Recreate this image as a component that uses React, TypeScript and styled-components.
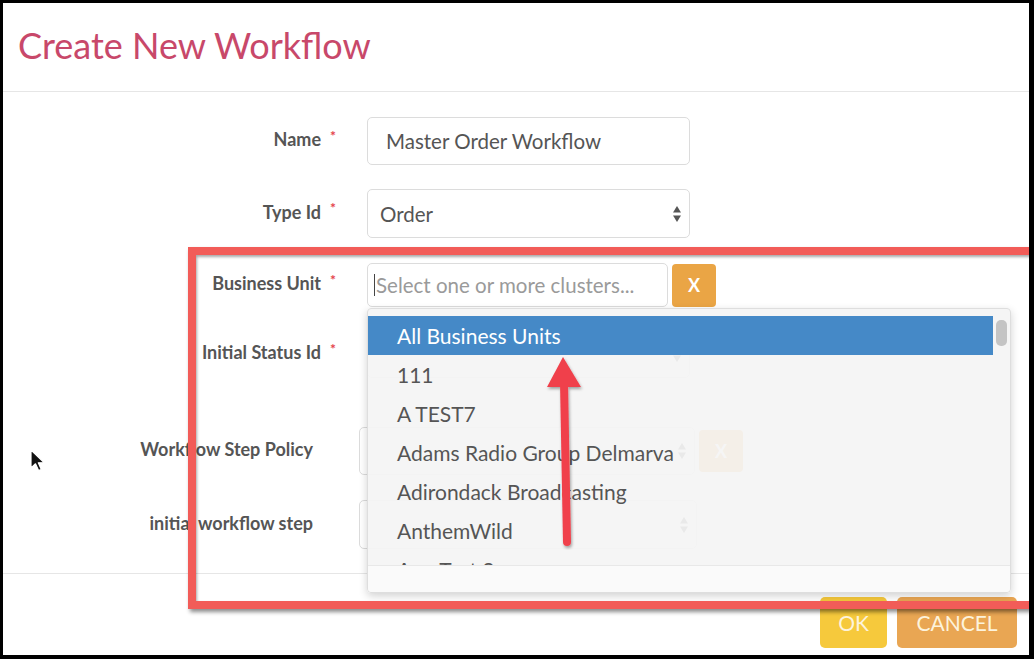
import styled, { createGlobalStyle } from 'styled-components';

const GlobalStyle = createGlobalStyle`
  html, body {
    margin: 0;
    padding: 0;
    background: #000;
  }
  body {
    font-family: Lato, "Open Sans", sans-serif;
  }
`

const Screen = styled.div`
  width: 1034px;
  height: 659px;
  box-sizing: border-box;
  padding: 3px 5px 4px 3px;
  background: #000;
`

const Modal = styled.div`
  position: relative;
  height: 100%;
  background: #fff;
  display: flex;
  flex-direction: column;
  overflow: hidden;
`

const Header = styled.header`
  height: 88px;
  flex-shrink: 0;
  display: flex;
  align-items: center;
  padding-left: 15px;
  border-bottom: 1px solid #e6e6e6;
`

const Title = styled.h1`
  margin: -4px 0 0;
  font-size: 36px;
  font-weight: 400;
  color: #c8486a;
`

const Body = styled.main`
  flex-shrink: 0;
  padding: 25px 0 24px;
  border-bottom: 1px solid #e6e6e6;
  display: flex;
  flex-direction: column;
`

const Row = styled.div<{ $top?: number; $labelWidth?: number; $slot?: number }>`
  display: grid;
  grid-template-columns: ${p => p.$labelWidth ?? 318}px ${p => p.$slot ?? 46}px auto;
  align-items: center;
  margin-top: ${p => p.$top ?? 0}px;
`

const Label = styled.label`
  margin-top: -4px;
  text-align: right;
  font-size: 18px;
  font-weight: 700;
  color: #555;
`

const Req = styled.span`
  align-self: center;
  padding-left: 9px;
  margin-top: -12px;
  font-size: 14px;
  font-weight: 700;
  color: #e4434a;
`

const Field = styled.div<{ $w: number; $h: number; $pad?: number; $muted?: boolean }>`
  position: relative;
  box-sizing: border-box;
  width: ${p => p.$w}px;
  height: ${p => p.$h}px;
  display: flex;
  align-items: center;
  padding-left: ${p => p.$pad ?? 12}px;
  border: 1px solid #dcdcdc;
  border-radius: 5px;
  background: #fff;
  font-size: 20.5px;
  color: ${p => (p.$muted ? '#9a9a9a' : '#555')};
`

const Arrows = styled.svg`
  position: absolute;
  right: 7px;
  top: 50%;
  margin-top: -9px;
`

const Caret = styled.span`
  display: inline-block;
  width: 1px;
  height: 22px;
  margin-right: 1px;
  background: #444;
`

const Inline = styled.div`
  position: relative;
  display: flex;
  align-items: center;
  gap: 4px;
`

const ClearButton = styled.button<{ $h: number }>`
  width: 44px;
  height: ${p => p.$h}px;
  border: none;
  border-radius: 4px;
  background: #eaa545;
  color: #fff;
  font-family: inherit;
  font-size: 18px;
  font-weight: 700;
`

const Dropdown = styled.div`
  position: absolute;
  left: 0;
  top: 45px;
  width: 644px;
  height: 285px;
  box-sizing: border-box;
  display: grid;
  grid-template-columns: 1fr 17px;
  grid-template-rows: 1fr 26px;
  background: rgba(244, 244, 244, 0.93);
  border: 1px solid #dedede;
  border-radius: 4px;
  box-shadow: 0 3px 8px rgba(0, 0, 0, 0.18);
  z-index: 2;
`

const List = styled.ul`
  margin: 0;
  padding: 7px 0 0;
  list-style: none;
  overflow: hidden;
  border-bottom: 1px solid #e8e8e8;
`

const Option = styled.li<{ $active?: boolean }>`
  height: 39px;
  display: flex;
  align-items: center;
  padding-left: 29px;
  font-size: 21px;
  color: ${p => (p.$active ? '#fff' : '#555')};
  background: ${p => (p.$active ? '#4589c7' : 'transparent')};
`

const ScrollTrack = styled.div`
  padding: 11px 0 0 3px;
  border-bottom: 1px solid #e8e8e8;
`

const Thumb = styled.div`
  width: 11px;
  height: 26px;
  border-radius: 5px;
  background: #c4c4c4;
`

const HScroll = styled.div`
  grid-column: 1 / span 2;
  background: #fafafa;
  border-radius: 0 0 4px 4px;
`

const Footer = styled.footer`
  display: flex;
  justify-content: flex-end;
  gap: 10px;
  padding: 23px 12px 0 0;
`

const FooterButton = styled.button<{ $tone: 'ok' | 'cancel'; $w: number }>`
  width: ${p => p.$w}px;
  height: 51px;
  border: none;
  border-radius: 5px;
  background: ${p => (p.$tone === 'ok' ? '#f6c93c' : '#e9a653')};
  color: #fdf3dc;
  font-family: inherit;
  font-size: 21px;
  font-weight: 400;
`

const Highlight = styled.div`
  position: absolute;
  left: 185px;
  top: 244px;
  width: 900px;
  height: 362px;
  box-sizing: border-box;
  border: 8px solid #f25c58;
  box-shadow: 2px 3px 4px rgba(0, 0, 0, 0.45), inset 1px 2px 3px rgba(0, 0, 0, 0.35);
  z-index: 5;
  pointer-events: none;
`

const Overlay = styled.svg`
  position: absolute;
  z-index: 6;
  pointer-events: none;
`

function SelectArrows() {
  return (
    <Arrows width="10" height="18" viewBox="0 0 10 18">
      <polygon points="5,1 9,7.5 1,7.5" fill="#555" />
      <polygon points="1,10.5 9,10.5 5,17" fill="#555" />
    </Arrows>
  )
}

const options = [
  'All Business Units',
  '111',
  'A TEST7',
  'Adams Radio Group Delmarva',
  'Adirondack Broadcasting',
  'AnthemWild',
  'Ann Test 3',
]

function App() {
  return (
    <>
      <GlobalStyle />
      <Screen>
        <Modal>
          <Header>
            <Title>Create New Workflow</Title>
          </Header>

          <Body>
            <Row>
              <Label>Name</Label>
              <Req>*</Req>
              <Field $w={323} $h={48} $pad={18}>Master Order Workflow</Field>
            </Row>

            <Row $top={24}>
              <Label>Type Id</Label>
              <Req>*</Req>
              <Field $w={323} $h={49}>
                Order
                <SelectArrows />
              </Field>
            </Row>

            <Row $top={25}>
              <Label>Business Unit</Label>
              <Req>*</Req>
              <Inline>
                <Field $w={301} $h={44} $pad={6} $muted>
                  <Caret />
                  Select one or more clusters...
                </Field>
                <ClearButton $h={43}>X</ClearButton>
                <Dropdown>
                  <List>
                    {options.map((o, i) => (
                      <Option key={o} $active={i === 0}>{o}</Option>
                    ))}
                  </List>
                  <ScrollTrack>
                    <Thumb />
                  </ScrollTrack>
                  <HScroll />
                </Dropdown>
              </Inline>
            </Row>

            <Row $top={23}>
              <Label>Initial Status Id</Label>
              <Req>*</Req>
              <Field $w={323} $h={48}>
                <SelectArrows />
              </Field>
            </Row>

            <Row $top={49} $labelWidth={310}>
              <Label>Workflow Step Policy</Label>
              <span />
              <Inline>
                <Field $w={336} $h={48}>
                  <SelectArrows />
                </Field>
                <ClearButton $h={42}>X</ClearButton>
              </Inline>
            </Row>

            <Row $top={25} $labelWidth={310}>
              <Label>initial workflow step</Label>
              <span />
              <Field $w={338} $h={49}>
                <SelectArrows />
              </Field>
            </Row>
          </Body>

          <Footer>
            <FooterButton $tone="ok" $w={67}>OK</FooterButton>
            <FooterButton $tone="cancel" $w={120}>CANCEL</FooterButton>
          </Footer>

          <Highlight />

          {/* annotation arrow pointing at the first option */}
          <Overlay width="44" height="196" viewBox="0 0 44 196" style={{ left: 541, top: 351 }}>
            <defs>
              <filter id="sh" x="-50%" y="-10%" width="200%" height="130%">
                <feDropShadow dx="1" dy="2" stdDeviation="1.5" floodColor="#000" floodOpacity="0.35" />
              </filter>
            </defs>
            <g filter="url(#sh)">
              <line x1="20" y1="28" x2="23" y2="188" stroke="#f0414b" strokeWidth="8" strokeLinecap="round" />
              <polygon points="19,3 37,33 3,33" fill="#f0414b" />
            </g>
          </Overlay>

          {/* mouse pointer */}
          <Overlay width="18" height="24" viewBox="0 0 18 24" style={{ left: 26, top: 446 }}>
            <path d="M2 1 L2 19 L6.5 14.8 L9.6 21.6 L12.3 20.4 L9.3 13.8 L15 13.5 Z" fill="#111" stroke="#fff" strokeWidth="1.2" strokeLinejoin="round" />
          </Overlay>
        </Modal>
      </Screen>
    </>
  )
}

export default App
